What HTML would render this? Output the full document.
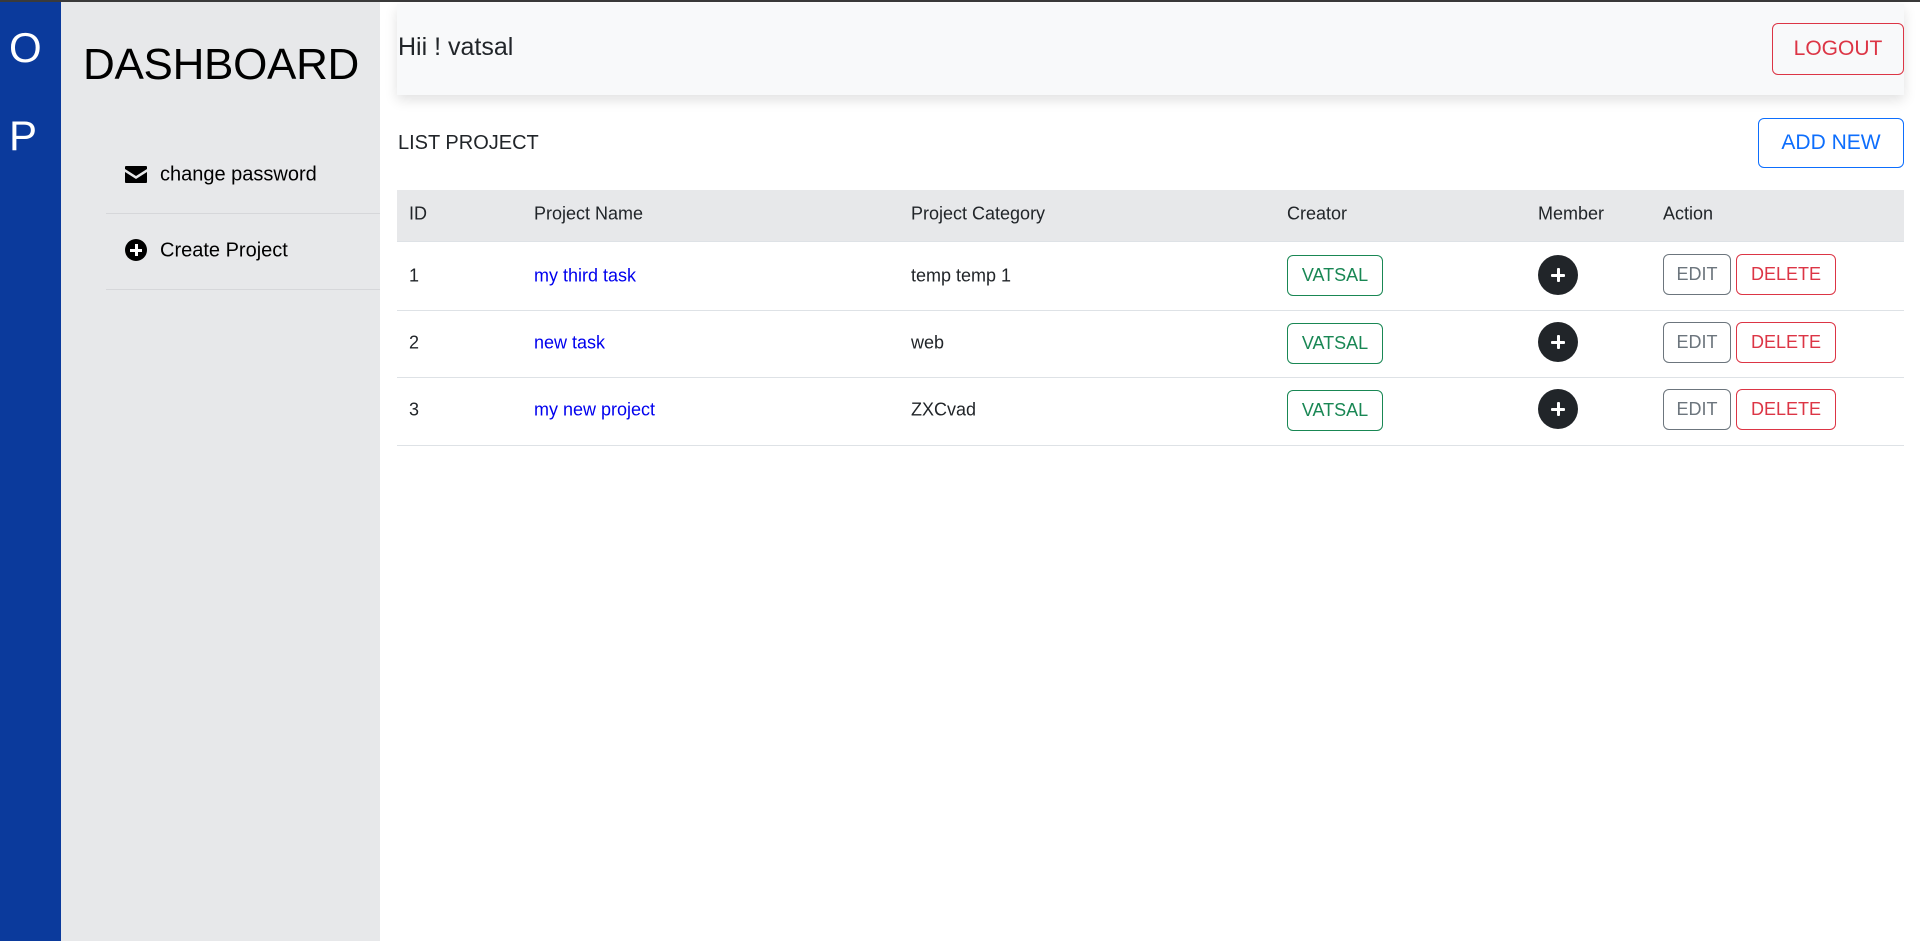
<!DOCTYPE html>
<html><head><style>
*{margin:0;padding:0;box-sizing:border-box}
body{width:1920px;height:941px;overflow:hidden;background:#fff;font-family:"Liberation Sans",sans-serif;color:#212529;position:relative}
.abs{position:absolute}
.top{left:0;top:0;width:1920px;height:2px;background:#3a3a3a}
.blue{left:0;top:2px;width:61px;height:939px;background:#0b3a9c;color:#fff;font-size:42px}
.side{left:61px;top:2px;width:319px;height:939px;background:#e7e8ea}
.dash{left:83px;top:40px;font-size:44px;letter-spacing:-0.3px;color:#000}
.div{height:1px;background:#d6d7da;left:106px;width:274px}
.menu{left:160px;font-size:20px;color:#000;transform:translateY(-50%)}
.hdr{left:397px;top:4px;width:1507px;height:91px;background:#f8f9fa;box-shadow:0 5px 12px rgba(0,0,0,.12)}
.btn{border:1px solid;border-radius:6px;display:flex;align-items:center;justify-content:center;background:transparent}
.cell{transform:translateY(-50%);font-size:18px}
.rowline{left:397px;width:1507px;height:1px;background:#dee2e6}
a{color:#0000ee;text-decoration:none}
.plus{width:40px;height:40px;border-radius:50%;background:#212529}
.plus:before,.plus:after{content:"";position:absolute;background:#fff;left:13px;top:18.5px;width:14px;height:3px;border-radius:1px}
.plus:after{left:18.5px;top:13px;width:3px;height:14px}
</style></head><body>
<div class="abs top"></div>
<div class="abs blue"><div class="abs" style="left:9px;top:22px">O</div><div class="abs" style="left:9px;top:110px">P</div></div>
<div class="abs side"></div>
<div class="abs dash">DASHBOARD</div>
<svg class="abs" style="left:125px;top:166px" width="22" height="17" viewBox="0 0 22 17"><path d="M1 0h20a1 1 0 0 1 1 1v2L11 10 0 3V1a1 1 0 0 1 1-1zM0 6l11 7 11-7v10a1 1 0 0 1-1 1H1a1 1 0 0 1-1-1z" fill="#000"/></svg>
<div class="abs menu" style="top:175px">change password</div>
<div class="abs div" style="top:213px"></div>
<div class="abs" style="left:125px;top:239px;width:22px;height:22px;border-radius:50%;background:#000"></div>
<div class="abs" style="left:130px;top:248.5px;width:12px;height:3px;background:#fff"></div>
<div class="abs" style="left:134.5px;top:244px;width:3px;height:12px;background:#fff"></div>
<div class="abs menu" style="top:251px">Create Project</div>
<div class="abs div" style="top:289px"></div>

<div class="abs hdr"></div>
<div class="abs" style="left:398px;top:33px;font-size:25px;color:#212529">Hii ! vatsal</div>
<div class="abs btn" style="left:1772px;top:23px;width:132px;height:52px;border-color:#dc3545;color:#dc3545;font-size:21px">LOGOUT</div>
<div class="abs" style="left:398px;top:132px;font-size:20px">LIST PROJECT</div>
<div class="abs btn" style="left:1758px;top:118px;width:146px;height:50px;border-color:#0d6efd;color:#0d6efd;font-size:21px">ADD NEW</div>

<div class="abs" style="left:397px;top:190px;width:1507px;height:52px;background:#e7e8ea;border-bottom:1px solid #dee2e6"></div>
<div class="abs cell" style="left:409px;top:214px">ID</div>
<div class="abs cell" style="left:534px;top:214px">Project Name</div>
<div class="abs cell" style="left:911px;top:214px">Project Category</div>
<div class="abs cell" style="left:1287px;top:214px">Creator</div>
<div class="abs cell" style="left:1538px;top:214px">Member</div>
<div class="abs cell" style="left:1663px;top:214px">Action</div>

<div class="abs cell" style="left:409px;top:276px">1</div>
<div class="abs cell" style="left:534px;top:276px"><a>my third task</a></div>
<div class="abs cell" style="left:911px;top:276px">temp temp 1</div>
<div class="abs rowline" style="top:310px"></div>
<div class="abs cell" style="left:409px;top:343px">2</div>
<div class="abs cell" style="left:534px;top:343px"><a>new task</a></div>
<div class="abs cell" style="left:911px;top:343px">web</div>
<div class="abs rowline" style="top:377px"></div>
<div class="abs cell" style="left:409px;top:410px">3</div>
<div class="abs cell" style="left:534px;top:410px"><a>my new project</a></div>
<div class="abs cell" style="left:911px;top:410px">ZXCvad</div>
<div class="abs rowline" style="top:445px"></div>

<div class="abs btn" style="left:1287px;top:255px;width:96px;height:41px;border-color:#198754;color:#198754;font-size:18px">VATSAL</div>
<div class="abs btn" style="left:1287px;top:323px;width:96px;height:41px;border-color:#198754;color:#198754;font-size:18px">VATSAL</div>
<div class="abs btn" style="left:1287px;top:390px;width:96px;height:41px;border-color:#198754;color:#198754;font-size:18px">VATSAL</div>
<div class="abs plus" style="left:1538px;top:255px"></div>
<div class="abs plus" style="left:1538px;top:322px"></div>
<div class="abs plus" style="left:1538px;top:389px"></div>
<div class="abs btn" style="left:1663px;top:254px;width:68px;height:41px;border-color:#6c757d;color:#6c757d;font-size:18px">EDIT</div>
<div class="abs btn" style="left:1736px;top:254px;width:100px;height:41px;border-color:#dc3545;color:#dc3545;font-size:18px">DELETE</div>
<div class="abs btn" style="left:1663px;top:322px;width:68px;height:41px;border-color:#6c757d;color:#6c757d;font-size:18px">EDIT</div>
<div class="abs btn" style="left:1736px;top:322px;width:100px;height:41px;border-color:#dc3545;color:#dc3545;font-size:18px">DELETE</div>
<div class="abs btn" style="left:1663px;top:389px;width:68px;height:41px;border-color:#6c757d;color:#6c757d;font-size:18px">EDIT</div>
<div class="abs btn" style="left:1736px;top:389px;width:100px;height:41px;border-color:#dc3545;color:#dc3545;font-size:18px">DELETE</div>
</body></html>
